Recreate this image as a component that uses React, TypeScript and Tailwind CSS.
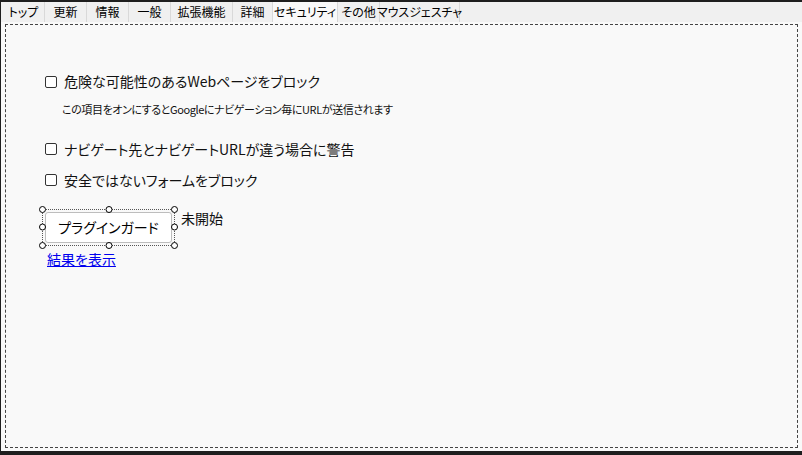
import React from "react";

const tabs = [
  { label: "トップ", w: 42 },
  { label: "更新", w: 42 },
  { label: "情報", w: 42 },
  { label: "一般", w: 42 },
  { label: "拡張機能", w: 62 },
  { label: "詳細", w: 40 },
  { label: "セキュリティ", w: 65, active: true },
  { label: "その他", w: 42 },
  { label: "マウスジェスチャ", w: 80 },
];

const font = { fontFamily: '"Noto Sans CJK JP", "Noto Sans", sans-serif' };

function Check({ label }: { label: string }) {
  return (
    <label className="flex items-center gap-[7px] text-[14px] text-[#111]">
      <span className="h-[12px] w-[12px] rounded-[2px] border border-[#333] bg-white" />
      {label}
    </label>
  );
}

function Handle({ className }: { className: string }) {
  return (
    <span
      className={`absolute h-[7px] w-[7px] rounded-full border border-black bg-white ${className}`}
    />
  );
}

export default function App() {
  return (
    <div
      className="flex h-[455px] w-[802px] flex-col bg-[#1e1e1e] pb-[4px] pl-[1px] pt-[2px] [font-feature-settings:'palt']"
      style={font}
    >
      <div className="flex flex-1 flex-col bg-[#f0f0f0]">
        <div className="flex h-[20px] pl-[2px]">
          {tabs.map((t) => (
            <div
              key={t.label}
              className={`flex items-center justify-center whitespace-nowrap border-r border-[#d9d9d9] text-[12px] leading-none text-black ${
                t.active ? "bg-[#f9f9f9]" : "bg-[#f0f0f0]"
              }`}
              style={{ width: t.w }}
            >
              {t.label}
            </div>
          ))}
        </div>
        <div className="flex flex-1 bg-[#f9f9f9] px-[4px] pb-[3px] pt-[2px]">
          <div className="flex flex-1 flex-col border border-dashed border-[#444] pl-[39px] pt-[46px]">
            <Check label="危険な可能性のあるWebページをブロック" />
            <p className="mt-[9px] pl-[17px] text-[11px] tracking-[-0.4px] text-[#111]">
              この項目をオンにするとGoogleにナビゲーション毎にURLが送信されます
            </p>
            <div className="mt-[21px]">
              <Check label="ナビゲート先とナビゲートURLが違う場合に警告" />
            </div>
            <div className="mt-[10px]">
              <Check label="安全ではないフォームをブロック" />
            </div>
            <div className="mt-[18px] flex items-start gap-[6px]">
              <div className="relative -ml-[3px] border border-dotted border-[#555] p-[2px]">
                <button className="flex h-[31px] w-[127px] items-center justify-center rounded-[3px] border border-[#bdbdbd] bg-white text-[14px] text-black">
                  プラグインガード
                </button>
                <Handle className="-left-[4px] -top-[4px]" />
                <Handle className="left-1/2 -top-[4px] -translate-x-1/2" />
                <Handle className="-right-[4px] -top-[4px]" />
                <Handle className="-left-[4px] top-1/2 -translate-y-1/2" />
                <Handle className="-right-[4px] top-1/2 -translate-y-1/2" />
                <Handle className="-bottom-[4px] -left-[4px]" />
                <Handle className="-bottom-[4px] left-1/2 -translate-x-1/2" />
                <Handle className="-bottom-[4px] -right-[4px]" />
              </div>
              <span className="-mt-[1px] text-[14px] text-[#111]">未開始</span>
            </div>
            <a
              href="#"
              className="mt-[4px] self-start pl-[2px] text-[14px] leading-[18px] text-[#0000ee] underline"
            >
              結果を表示
            </a>
          </div>
        </div>
      </div>
    </div>
  );
}
